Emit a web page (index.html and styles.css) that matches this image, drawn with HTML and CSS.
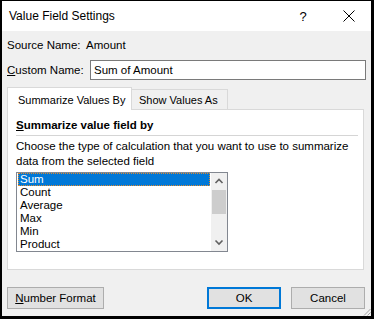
FILE: index.html
```html
<!DOCTYPE html>
<html lang="en">
<head>
  <meta charset="UTF-8">
  <title>Value Field Settings</title>
  <link rel="stylesheet" href="styles.css">
</head>
<body>
  <div class="dialog">
    <!-- Title bar -->
    <div class="titlebar">
      <span class="title">Value Field Settings</span>
      <span class="help">?</span>
      <svg class="close" width="12" height="12" viewBox="0 0 12 12">
        <path d="M0.5 0.5 L11.5 11.5 M11.5 0.5 L0.5 11.5" stroke="#000" stroke-width="1" fill="none"/>
      </svg>
    </div>

    <div class="content">
      <div class="row source-row">
        <span class="label">Source Name:</span>
        <span class="value">Amount</span>
      </div>
      <div class="row custom-row">
        <label class="label"><u>C</u>ustom Name:</label>
        <div class="input">Sum of Amount</div>
      </div>

      <!-- Tabs -->
      <div class="tabs">
        <div class="tab active">Summarize Values By</div>
        <div class="tab">Show Values As</div>
      </div>
      <div class="panel">
        <div class="group-title"><u>S</u>ummarize value field by</div>
        <div class="sep"></div>
        <p class="desc">Choose the type of calculation that you want to use to summarize<br>data from the selected field</p>
        <div class="listbox">
          <ul class="items">
            <li class="selected">Sum</li>
            <li>Count</li>
            <li>Average</li>
            <li>Max</li>
            <li>Min</li>
            <li>Product</li>
          </ul>
          <div class="scrollbar">
            <svg class="arrow" width="16" height="17" viewBox="0 0 16 17">
              <path d="M4.5 10 L8 6.5 L11.5 10" stroke="#606060" stroke-width="1.6" fill="none"/>
            </svg>
            <div class="thumb"></div>
            <div class="track"></div>
            <svg class="arrow" width="16" height="17" viewBox="0 0 16 17">
              <path d="M4.5 6.5 L8 10 L11.5 6.5" stroke="#606060" stroke-width="1.6" fill="none"/>
            </svg>
          </div>
        </div>
      </div>

      <!-- Buttons -->
      <div class="buttons">
        <button class="btn"><u>N</u>umber Format</button>
        <div class="spacer"></div>
        <button class="btn default">OK</button>
        <button class="btn">Cancel</button>
      </div>
    </div>

    <svg class="grip" width="8" height="8" viewBox="0 0 8 8">
      <path d="M7.5 1 L1 7.5 M7.5 4.5 L4.5 7.5" stroke="#a0a0a0" stroke-width="1" fill="none"/>
    </svg>
  </div>
</body>
</html>
```

FILE: styles.css
```css
* {
  box-sizing: border-box;
}

body {
  margin: 0;
  font-family: "Liberation Sans", Arial, sans-serif;
  font-size: 11.5px;
  color: #000;
}

/* Dialog frame */
.dialog {
  position: relative;
  width: 374px;
  height: 319px;
  border: solid #000;
  border-width: 1px 3px 3px 2px;
  background: #f0f0f0;
  display: flex;
  flex-direction: column;
}

.titlebar {
  height: 30px;
  background: #fff;
  display: flex;
  align-items: center;
  padding-left: 7px;
}

.title {
  flex: 1;
  font-size: 12px;
}

.help {
  width: 12px;
  margin-right: 34px;
  font-size: 13px;
  text-align: center;
}

.close {
  margin-right: 16px;
}

.content {
  padding: 6px 7px 0 5px;
  display: flex;
  flex-direction: column;
}

/* Name rows */
.row {
  display: flex;
  align-items: center;
  white-space: nowrap;
}

.source-row {
  height: 16px;
}

.source-row .label {
  width: 79px;
}

.custom-row {
  margin-top: 7px;
}

.custom-row .label {
  width: 83px;
}

.input {
  flex: 1;
  height: 20px;
  margin-right: -2px;
  border: 1px solid #7a7a7a;
  background: #fff;
  padding: 2px 3px;
  line-height: 14px;
}

/* Tabs */
.tabs {
  display: flex;
  align-items: flex-end;
  margin-top: 7px;
  height: 22px;
  position: relative;
  z-index: 1;
  white-space: nowrap;
  font-size: 11px;
}

.tab {
  height: 20px;
  padding: 0 0 0 7px;
  border: 1px solid #d9d9d9;
  border-bottom: none;
  background: #f0f0f0;
  line-height: 21px;
}

.tab.active {
  height: 23px;
  width: 125px;
  padding-left: 10px;
  background: #fff;
  margin-bottom: -1px;
  line-height: 24px;
}

.tab + .tab {
  border-left: none;
  width: 96px;
}

.panel {
  height: 161px;
  background: #fff;
  border: 1px solid #d9d9d9;
  padding: 7px 5px 0 8px;
}

.group-title {
  font-weight: bold;
  line-height: 16px;
}

.sep {
  height: 1px;
  background: #d5d5d5;
  margin: 2px 0 0 0;
}

.desc {
  margin: 3px 0 0 0;
  line-height: 15px;
  white-space: nowrap;
}

/* List box */
.listbox {
  display: flex;
  width: 212px;
  height: 80px;
  margin-top: 3px;
  border: 1px solid #828790;
  background: #fff;
}

.items {
  flex: 1;
  list-style: none;
  margin: 0;
  padding: 0 1px;
}

.items li {
  height: 13px;
  line-height: 13px;
  padding-left: 2px;
}

.items li.selected {
  background: #0078d7;
  color: #fff;
  outline: 1px dotted #e08a2c;
  outline-offset: -1px;
}

.scrollbar {
  width: 16px;
  background: #f0f0f0;
  display: flex;
  flex-direction: column;
}

.arrow {
  display: block;
  flex: none;
}

.thumb {
  height: 24px;
  margin: 0 1px;
  background: #cdcdcd;
}

.track {
  flex: 1;
}

/* Buttons */
.buttons {
  display: flex;
  margin-top: 17px;
  gap: 10px;
}

.spacer {
  flex: 1;
}

.btn {
  height: 22px;
  border: 1px solid #adadad;
  background: #e1e1e1;
  font-family: inherit;
  font-size: 11.5px;
  color: #000;
  padding: 0;
}

.btn:first-child {
  width: 97px;
}

.btn.default {
  width: 74px;
  border: 2px solid #0078d7;
}

.btn:last-child {
  width: 74px;
  margin-right: -1px;
}

.grip {
  position: absolute;
  right: 0;
  bottom: 0;
}
```
